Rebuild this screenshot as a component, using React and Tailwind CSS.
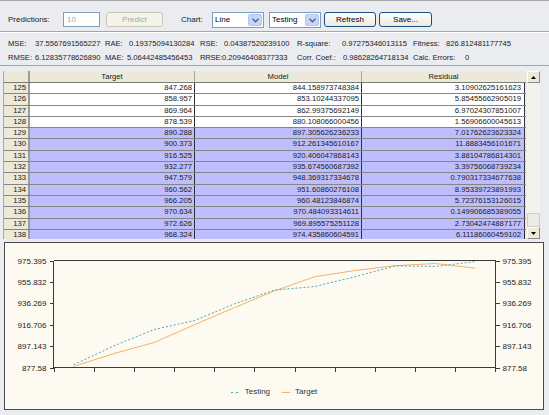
import React from "react";

const rows = [
  [125, "847.268", "844.158973748384", "3.10902625161623"],
  [126, "858.957", "853.10244337095", "5.85455662905019"],
  [127, "869.964", "862.99375692149", "6.97024307851007"],
  [128, "878.539", "880.108066000456", "1.56906600045613"],
  [129, "890.288", "897.305626236233", "7.01762623623324"],
  [130, "900.373", "912.261345610167", "11.8883456101671"],
  [131, "916.525", "920.406047868143", "3.88104786814301"],
  [132, "932.277", "935.674560687392", "3.39756068739234"],
  [133, "947.579", "948.369317334678", "0.790317334677638"],
  [134, "960.562", "951.60860276108", "8.95339723891993"],
  [135, "966.205", "960.48123846874", "5.72376153126015"],
  [136, "970.634", "970.484093314611", "0.149906685389055"],
  [137, "972.626", "969.895575251128", "2.73042474887177"],
  [138, "968.324", "974.435860604591", "6.11186060459102"],
];

function Chevron() {
  return (
    <svg width="7" height="5" viewBox="0 0 7 5">
      <path d="M0.5 0.8 L3.5 3.8 L6.5 0.8" fill="none" stroke="#4d6185" strokeWidth="1.4" />
    </svg>
  );
}

function Select({ label }) {
  return (
    <div className="w-[52px] h-[16px] border border-[#7f9db9] bg-white flex items-stretch">
      <div className="flex-1 pl-[2px] flex items-center text-black">{label}</div>
      <div className="w-[14px] m-[1px] bg-[#c6d6fb] border border-[#b3c6f0] rounded-[2px] flex items-center justify-center">
        <Chevron />
      </div>
    </div>
  );
}

function Chart() {
  const L = 48.5, R = 490.5, T = 17.5, B = 124.5;
  const yv = (v) => B - ((v - 877.58) / 97.815) * (B - T);
  const xs = (i) => L + 20.09 + i * 40.18;
  const tgt = rows.slice(3).map((r, i) => `${xs(i)},${yv(parseFloat(r[1]))}`).join(" ");
  const mdl = rows.slice(3).map((r, i) => `${xs(i)},${yv(parseFloat(r[2]))}`).join(" ");
  const labels = ["975.395", "955.832", "936.269", "916.706", "897.143", "877.58"];
  return (
    <svg width="538" height="140" className="block">
      <g stroke="#3a3a3a" strokeWidth="1" shapeRendering="crispEdges">
        <line x1={L} y1={T} x2={R} y2={T} />
        <line x1={L} y1={B} x2={R} y2={B} />
        <line x1={L} y1={T} x2={L} y2={B} />
        <line x1={R} y1={T} x2={R} y2={B} />
        {labels.map((l, k) => {
          const y = T + k * ((B - T) / 5);
          return (
            <g key={k}>
              <line x1={L - 4} y1={Math.round(y) + 0.5} x2={L} y2={Math.round(y) + 0.5} />
              <line x1={R} y1={Math.round(y) + 0.5} x2={R + 4} y2={Math.round(y) + 0.5} />
            </g>
          );
        })}
        {Array.from({ length: 12 }).map((_, k) => {
          const x = Math.round(L + k * 40.18) + 0.5;
          return <line key={k} x1={x} y1={B} x2={x} y2={B + 4} />;
        })}
      </g>
      <g fontSize="8" fill="#222">
        {labels.map((l, k) => {
          const y = T + k * ((B - T) / 5) + 3;
          return (
            <g key={k}>
              <text x={L - 7} y={y} textAnchor="end">{l}</text>
              <text x={R + 7} y={y}>{l}</text>
            </g>
          );
        })}
      </g>
      <polyline points={tgt} fill="none" stroke="#f6b266" strokeWidth="1" />
      <polyline points={mdl} fill="none" stroke="#4fa6b6" strokeWidth="1" strokeDasharray="2 2" />
    </svg>
  );
}

export default function App() {
  return (
    <div className="w-[549px] h-[415px] overflow-hidden bg-[#ebecf0] border-t border-[#a8a8a8] font-['Liberation_Sans',Arial,sans-serif] text-[8px] text-[#1a1a1a]">
      {/* toolbar */}
      <div className="h-[31px] pt-[11px] pl-[8px] flex items-start border-b border-[#a5a5a5]">
        <div className="w-[55px] h-[16px] flex items-center">Predictions:</div>
        <div className="w-[37px] h-[15px] border border-[#7f9db9] bg-white pl-[3px] flex items-center text-[#aca899]">10</div>
        <div className="ml-[6px] w-[57px] h-[15px] border border-[#c9c7ba] rounded-[3px] bg-[#f5f4ea] text-[#aca899] flex items-center justify-center">Predict</div>
        <div className="ml-[18px] w-[31px] h-[16px] flex items-center">Chart:</div>
        <Select label="Line" />
        <div className="ml-[5px]">
          <Select label="Testing" />
        </div>
        <div className="ml-[3px] w-[52px] h-[15px] border border-[#1c4f86] rounded-[3px] bg-gradient-to-b from-white to-[#ece9e0] flex items-center justify-center text-black">Refresh</div>
        <div className="ml-[3px] w-[53px] h-[15px] border border-[#1c4f86] rounded-[3px] bg-gradient-to-b from-white to-[#ece9e0] flex items-center justify-center text-black">Save...</div>
      </div>

      {/* stats */}
      <div className="h-[34px] pt-[4px] pl-[8px] border-t border-white border-b border-b-[#a5a5a5] leading-[12px] text-[7.6px]">
        <div className="flex h-[14px] items-center">
          <div className="w-[97px] flex"><span className="w-[27px]">MSE:</span><span>37.5567691565227</span></div>
          <div className="w-[95px] flex"><span className="w-[24px]">RAE:</span><span>0.19375094130284</span></div>
          <div className="w-[97px] flex"><span className="w-[24px]">RSE:</span><span>0.04387520239100</span></div>
          <div className="w-[116px] flex"><span className="w-[45px]">R-square:</span><span>0.97275346013115</span></div>
          <div className="flex"><span className="w-[33px]">Fitness:</span><span>826.812481177745</span></div>
        </div>
        <div className="flex h-[14px] items-center">
          <div className="w-[97px] flex"><span className="w-[27px]">RMSE:</span><span>6.12835778626890</span></div>
          <div className="w-[95px] flex"><span className="w-[22px]">MAE:</span><span>5.06442485456453</span></div>
          <div className="w-[97px] flex"><span className="w-[22px] tracking-[-0.2px]">RRSE:</span><span>0.20946408377333</span></div>
          <div className="w-[116px] flex"><span className="w-[46px]">Corr. Coef.:</span><span>0.98628264718134</span></div>
          <div className="flex"><span className="w-[52px]">Calc. Errors:</span><span>0</span></div>
        </div>
      </div>

      {/* table */}
      <div className="mt-[5px] ml-[3px] flex h-[168px] overflow-hidden">
        <div className="w-[523px] border-l border-[#a7a7a7] text-[7.7px] text-[#202020]">
          <div className="flex h-[12px] bg-[#ece9d8] border-b border-[#7a7a7a] leading-[11px]">
            <div className="w-[26px] border-r-2 border-[#9d9c95]"></div>
            <div className="w-[165px] text-center border-r border-[#a9a79c]">Target</div>
            <div className="w-[167px] text-center border-r border-[#a9a79c]">Model</div>
            <div className="w-[163px] text-center">Residual</div>
          </div>
          {rows.map((r) => {
            const hl = r[0] >= 129;
            return (
              <div key={r[0]} className="flex h-[11.3px] border-b border-[#858585] leading-[10px]">
                <div className="w-[26px] bg-[#ece9d8] border-r-2 border-[#9d9c95] text-right pr-[2px]">{r[0]}</div>
                <div className={hl ? "w-[165px] bg-[#bebefd] text-right pr-[2px] border-r border-[#303030]" : "w-[165px] bg-white text-right pr-[2px] border-r border-[#303030]"}>{r[1]}</div>
                <div className={hl ? "w-[167px] bg-[#bebefd] text-right pr-[2px] border-r border-[#303030]" : "w-[167px] bg-white text-right pr-[2px] border-r border-[#303030]"}>{r[2]}</div>
                <div className={hl ? "w-[163px] bg-[#bebefd] text-right pr-[3px] border-r border-[#303030]" : "w-[163px] bg-white text-right pr-[3px] border-r border-[#303030]"}>{r[3]}</div>
              </div>
            );
          })}
        </div>
        {/* scrollbar */}
        <div className="ml-[1px] w-[13px] bg-[#f3f2ec] flex flex-col">
          <div className="h-[12px] bg-[#ece9d8] border border-t-white border-l-white border-r-[#8a8a8a] border-b-[#8a8a8a] flex items-center justify-center">
            <svg width="5" height="3" viewBox="0 0 5 3"><path d="M2.5 0 L5 3 L0 3 Z" fill="#000" /></svg>
          </div>
          <div className="flex-1" />
          <div className="h-[14px] bg-[#ecebe5] border border-[#cfcdc4]" />
          <div className="h-[12px] bg-[#ece9d8] border border-t-white border-l-white border-r-[#8a8a8a] border-b-[#8a8a8a] flex items-center justify-center">
            <svg width="5" height="3" viewBox="0 0 5 3"><path d="M0 0 L5 0 L2.5 3 Z" fill="#000" /></svg>
          </div>
        </div>
      </div>

      {/* chart */}
      <div className="mt-[3px] ml-[4px] w-[540px] h-[168px] border border-[#4a4a4a] bg-[#fdfaf2]">
        <Chart />
        <div className="flex justify-center items-center h-[18px] text-[8px] text-[#333]">
          <svg width="8" height="3" className="mr-[6px]"><line x1="0" y1="1.5" x2="8" y2="1.5" stroke="#4fa6b6" strokeDasharray="2 3" /></svg>
          <span>Testing</span>
          <svg width="8" height="3" className="ml-[12px] mr-[5px]"><line x1="0" y1="1.5" x2="8" y2="1.5" stroke="#f6b266" /></svg>
          <span>Target</span>
        </div>
      </div>
    </div>
  );
}
